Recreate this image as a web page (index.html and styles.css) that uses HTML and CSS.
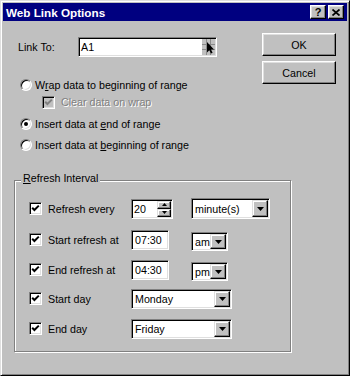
FILE: index.html
```html
<!DOCTYPE html>
<html>
<head>
<meta charset="utf-8">
<title>Web Link Options</title>
<link rel="stylesheet" href="styles.css">
</head>
<body>
<div class="window">
  <div class="titlebar">
    <span class="title">Web Link Options</span>
    <div class="tbtns">
      <span class="tbtn help">?</span>
      <span class="tbtn close"><svg width="8" height="7" viewBox="0 0 8 7"><path d="M0.5 0.5 L7.5 6.5 M7.5 0.5 L0.5 6.5" stroke="#000" stroke-width="1.7" fill="none"/></svg></span>
    </div>
  </div>
  <div class="top">
    <div class="opts">
      <div class="linkrow">
        <span class="lbl">Link To:</span>
        <div class="field link">
          <span class="val">A1</span>
          <span class="pick"><svg width="13" height="16" viewBox="0 0 13 16"><rect x="0" y="0" width="13" height="16" fill="#c0c0c0"/><path d="M0 5.5 H13 M0 10.5 H13 M4.5 0 V16 M8.5 0 V16" stroke="#8a8a8a" stroke-width="1"/><polygon points="5,3 5,13.5 7.3,11.2 9,14.5 10.6,13.7 9,10.4 12,10.4" fill="#000"/></svg></span>
        </div>
      </div>
      <div class="opt r1"><span class="radio"></span><span>W<u>r</u>ap data to beginning of range</span></div>
      <div class="opt sub"><span class="check dis"><svg width="9" height="9" viewBox="0 0 9 9"><path d="M1.2 3.8 L3.4 6 L7.8 1.6" stroke="#808080" stroke-width="2" fill="none"/></svg></span><span class="distext">Clear data on wrap</span></div>
      <div class="opt r2"><span class="radio on"></span><span>Insert data at <u>e</u>nd of range</span></div>
      <div class="opt r3"><span class="radio"></span><span>Insert data at <u>b</u>eginning of range</span></div>
    </div>
    <div class="btns">
      <div class="btn">OK</div>
      <div class="btn">Cancel</div>
    </div>
  </div>
  <div class="group">
    <span class="legend"><u>R</u>efresh Interval</span>
    <div class="grow">
      <span class="check"><svg width="9" height="9" viewBox="0 0 9 9"><path d="M1.2 3.8 L3.4 6 L7.8 1.6" stroke="#000" stroke-width="2" fill="none"/></svg></span>
      <span class="rlbl">Refresh every</span>
      <div class="field spin">
        <span class="sval">20</span>
        <div class="spinner">
          <span class="sbtn"><svg width="5" height="3" viewBox="0 0 5 3"><polygon points="2.5,0 5,3 0,3" fill="#000"/></svg></span>
          <span class="sbtn"><svg width="5" height="3" viewBox="0 0 5 3"><polygon points="0,0 5,0 2.5,3" fill="#000"/></svg></span>
        </div>
      </div>
      <div class="field combo wmin"><span class="cval">minute(s)</span><span class="drop"><svg width="7" height="4" viewBox="0 0 7 4"><polygon points="0,0 7,0 3.5,4" fill="#000"/></svg></span></div>
    </div>
    <div class="grow">
      <span class="check"><svg width="9" height="9" viewBox="0 0 9 9"><path d="M1.2 3.8 L3.4 6 L7.8 1.6" stroke="#000" stroke-width="2" fill="none"/></svg></span>
      <span class="rlbl">Start refresh at</span>
      <div class="field edit"><span class="cval">07:30</span></div>
      <div class="field combo wampm"><span class="cval">am</span><span class="drop"><svg width="7" height="4" viewBox="0 0 7 4"><polygon points="0,0 7,0 3.5,4" fill="#000"/></svg></span></div>
    </div>
    <div class="grow">
      <span class="check"><svg width="9" height="9" viewBox="0 0 9 9"><path d="M1.2 3.8 L3.4 6 L7.8 1.6" stroke="#000" stroke-width="2" fill="none"/></svg></span>
      <span class="rlbl">End refresh at</span>
      <div class="field edit"><span class="cval">04:30</span></div>
      <div class="field combo wampm"><span class="cval">pm</span><span class="drop"><svg width="7" height="4" viewBox="0 0 7 4"><polygon points="0,0 7,0 3.5,4" fill="#000"/></svg></span></div>
    </div>
    <div class="grow">
      <span class="check"><svg width="9" height="9" viewBox="0 0 9 9"><path d="M1.2 3.8 L3.4 6 L7.8 1.6" stroke="#000" stroke-width="2" fill="none"/></svg></span>
      <span class="rlbl">Start day</span>
      <div class="field combo wday"><span class="cval">Monday</span><span class="drop"><svg width="7" height="4" viewBox="0 0 7 4"><polygon points="0,0 7,0 3.5,4" fill="#000"/></svg></span></div>
    </div>
    <div class="grow">
      <span class="check"><svg width="9" height="9" viewBox="0 0 9 9"><path d="M1.2 3.8 L3.4 6 L7.8 1.6" stroke="#000" stroke-width="2" fill="none"/></svg></span>
      <span class="rlbl">End day</span>
      <div class="field combo wday"><span class="cval">Friday</span><span class="drop"><svg width="7" height="4" viewBox="0 0 7 4"><polygon points="0,0 7,0 3.5,4" fill="#000"/></svg></span></div>
    </div>
  </div>
</div>
</body>
</html>
```

FILE: styles.css
```css
* { box-sizing: border-box; }
html, body { margin: 0; padding: 0; }
body {
  width: 350px;
  height: 376px;
  overflow: hidden;
  background: #c0c0c0;
  font-family: "Liberation Sans", Arial, sans-serif;
  font-size: 10.7px;
  color: #000;
}
u { text-decoration: underline; text-underline-offset: 1px; }

.window {
  width: 350px;
  height: 376px;
  background: #c0c0c0;
  border: 1px solid;
  border-color: #dfdfdf #000 #000 #dfdfdf;
  box-shadow: inset 1px 1px #fff, inset -1px -1px #808080;
  padding: 2px;
}

.titlebar {
  height: 18px;
  background: #000080;
  display: flex;
  align-items: center;
  justify-content: space-between;
  padding: 0 3px 0 3px;
}
.title {
  color: #fff;
  font-weight: bold;
  font-size: 11.7px;
}
.tbtns { display: flex; gap: 2px; }
.tbtn {
  width: 16px;
  height: 14px;
  background: #c0c0c0;
  border: 1px solid;
  border-color: #fff #000 #000 #fff;
  box-shadow: inset -1px -1px #808080, inset 1px 1px #dfdfdf;
  display: flex;
  align-items: center;
  justify-content: center;
  font-weight: bold;
  font-size: 11px;
  line-height: 1;
}

/* raised / sunken */
.btn {
  height: 23px;
  background: #c0c0c0;
  border: 1px solid;
  border-color: #fff #000 #000 #fff;
  box-shadow: inset -1px -1px #808080, inset 1px 1px #dfdfdf;
  display: flex;
  align-items: center;
  justify-content: center;
}
.field {
  background: #fff;
  border: 1px solid;
  border-color: #808080 #fff #fff #808080;
  box-shadow: inset 1px 1px #000, inset -1px -1px #dfdfdf;
  padding: 1px;
  display: flex;
  align-items: center;
}

.top { display: flex; justify-content: space-between; }
.opts { padding-left: 15px; }
.linkrow {
  display: flex;
  align-items: center;
  height: 20px;
  margin-top: 16px;
}
.lbl { width: 60px; }
.link {
  width: 139px;
  height: 20px;
  justify-content: space-between;
}
.link .val { padding-left: 1px; }
.pick { width: 13px; height: 16px; display: block; }
.pick svg { display: block; }

.opt {
  display: flex;
  align-items: center;
  height: 16px;
  padding-left: 2px;
  gap: 3px;
}
.r1 { margin-top: 20px; }
.sub { margin-top: 1px; padding-left: 24px; gap: 6px; }
.r2 { margin-top: 6px; }
.r3 { margin-top: 5px; }

.radio {
  width: 12px;
  height: 12px;
  border-radius: 50%;
  background: #fff;
  border: 1px solid;
  border-color: #808080 #fff #fff #808080;
  box-shadow: inset 1px 1px #000, inset -1px -1px #dfdfdf;
  display: flex;
  align-items: center;
  justify-content: center;
  flex: none;
}
.radio.on::after {
  content: "";
  width: 4px;
  height: 4px;
  border-radius: 50%;
  background: #000;
}
.check {
  width: 13px;
  height: 13px;
  background: #fff;
  border: 1px solid;
  border-color: #808080 #fff #fff #808080;
  box-shadow: inset 1px 1px #000, inset -1px -1px #dfdfdf;
  display: flex;
  align-items: center;
  justify-content: center;
  flex: none;
}
.check svg { display: block; }
.check.dis { background: #c0c0c0; }
.distext { color: #808080; text-shadow: 1px 1px #fff; }

.btns {
  width: 74px;
  margin-top: 12px;
  margin-right: 11px;
  display: flex;
  flex-direction: column;
  gap: 5px;
}

.group {
  position: relative;
  width: 277px;
  height: 172px;
  margin: 27px 0 0 11px;
  border: 1px solid #808080;
  box-shadow: inset 1px 1px #fff, 1px 1px #fff;
  padding: 17px 0 0 14px;
  display: flex;
  flex-direction: column;
  gap: 9px;
}
.legend {
  position: absolute;
  left: 6px;
  top: -9px;
  padding: 0 2px;
  background: #c0c0c0;
  line-height: 13px;
}
.grow {
  display: grid;
  grid-template-columns: 19px 83px 60px auto;
  height: 21px;
  align-items: center;
}

.spin { width: 42px; height: 20px; }
.sval { flex: 1; padding-left: 1px; }
.spinner {
  width: 14px;
  height: 16px;
  display: flex;
  flex-direction: column;
}
.sbtn {
  height: 8px;
  background: #c0c0c0;
  border: 1px solid;
  border-color: #dfdfdf #000 #000 #dfdfdf;
  box-shadow: inset -1px -1px #808080, inset 1px 1px #fff;
  display: flex;
  align-items: center;
  justify-content: center;
}
.sbtn svg { display: block; }

.edit { width: 38px; height: 20px; }
.cval { flex: 1; padding-left: 2px; white-space: nowrap; }
.combo { justify-content: space-between; }
.drop {
  width: 16px;
  align-self: stretch;
  background: #c0c0c0;
  border: 1px solid;
  border-color: #dfdfdf #000 #000 #dfdfdf;
  box-shadow: inset -1px -1px #808080, inset 1px 1px #fff;
  display: flex;
  align-items: center;
  justify-content: center;
}
.drop svg { display: block; }
.wmin { width: 79px; height: 21px; }
.wampm { width: 37px; height: 19px; align-self: start; margin-top: 4px; }
.wday { width: 101px; height: 20px; grid-column: 3 / span 2; }
```
